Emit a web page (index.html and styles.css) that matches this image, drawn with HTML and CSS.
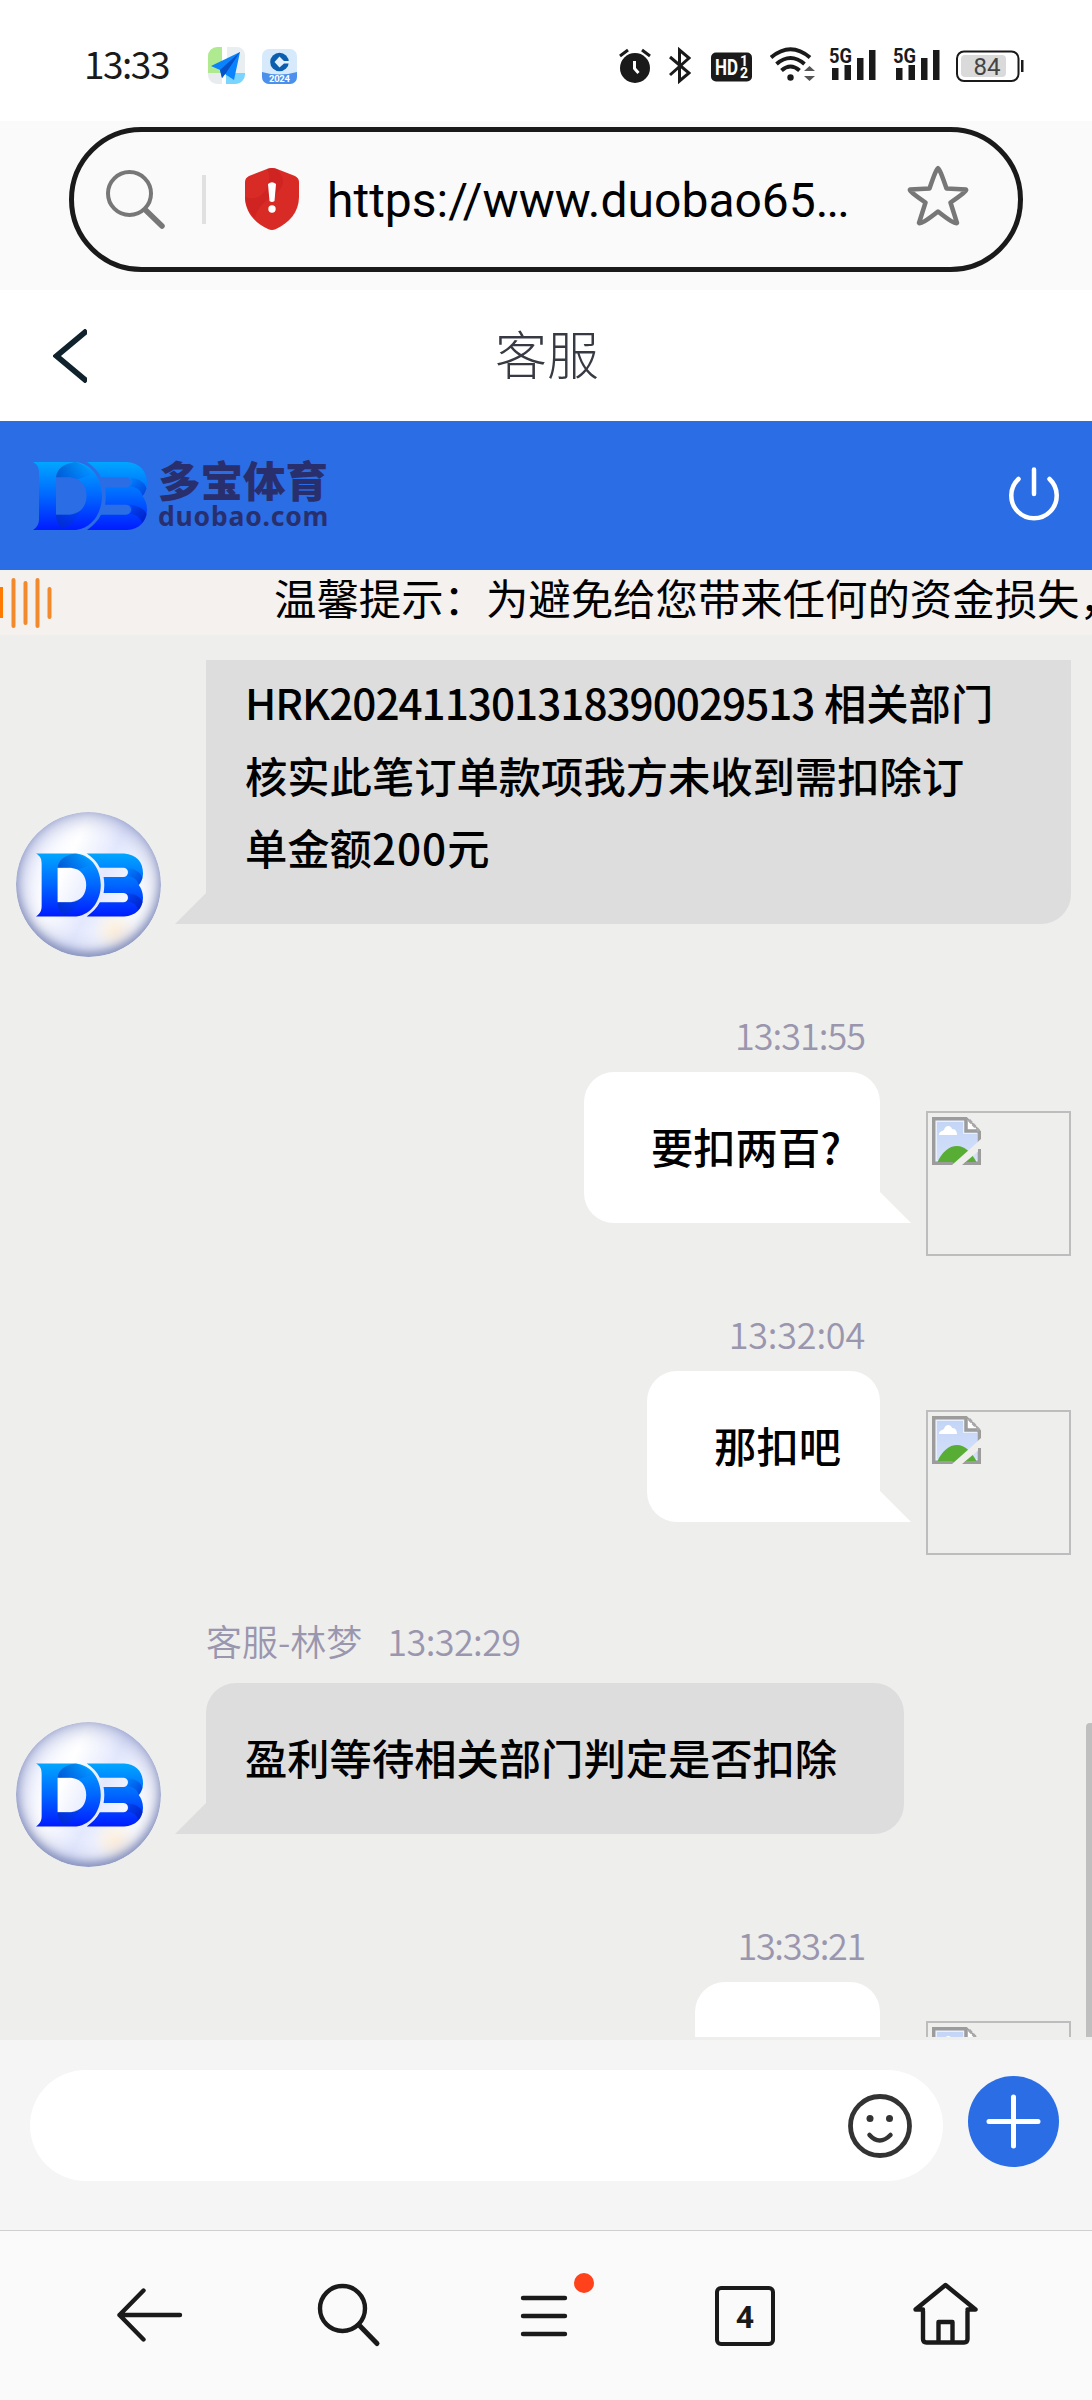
FILE: index.html
```html
<!DOCTYPE html>
<html lang="zh-CN">
<head>
<meta charset="utf-8">
<title>客服</title>
<link rel="stylesheet" href="styles.css">
</head>
<body>
<svg class="defs" width="0" height="0" aria-hidden="true">
  <defs>
    <linearGradient id="db-fill" x1="0" y1="0" x2="0" y2="67" gradientUnits="userSpaceOnUse">
      <stop offset="0" stop-color="#00a6ff"/><stop offset=".5" stop-color="#0066ff"/><stop offset="1" stop-color="#001cff"/>
    </linearGradient>
    <linearGradient id="db-fold" x1="0" y1="0" x2="1" y2="0">
      <stop offset="0" stop-color="#0030b0" stop-opacity=".55"/><stop offset="1" stop-color="#0040d0" stop-opacity="0"/>
    </linearGradient>
    <linearGradient id="db-curl" x1="1" y1="1" x2="0" y2="0">
      <stop offset="0" stop-color="#0018b8" stop-opacity=".75"/><stop offset="1" stop-color="#0040d0" stop-opacity="0"/>
    </linearGradient>
    <symbol id="db" viewBox="0 0 114 67">
      <path fill="url(#db-fill)" fill-rule="evenodd" d="M0 0H43C60 2 69 18 69 33.500C69 49 60 65 43 67H0C5 64 6 60 6 56V11C6 6 5 3 0 0ZM23 15V52H37C48 51 53.500 43 53.500 33.500C53.500 24 48 16 37 15Z"/>
      <path fill="url(#db-fill)" d="M54 0H94C107 1 114 9 114 21C114 27 111.500 31 109.500 33.500C112 37 114 41 114 47C114 59 106 66 94 67H54C60 63 65 58 68 52H93A5 5 0 0 0 93 42H72C73 37 73 30 72 25H93A5 5 0 0 0 93 15H68C65 9 60 4 54 0Z"/>
      <path fill="url(#db-fold)" d="M23 15C24 7 30 2 42 0C50 2 56 6 60 12L45 17L37 15ZM23 52H37L48 48L40 60L30 66C25 62 23 58 23 52Z"/>
      <path fill="url(#db-curl)" d="M93 15C105 15 112 20 113.500 26C112 30 111 32 109.500 33.500C108 28 104 25 97 24A5 5 0 0 0 93 15ZM93 42C105 42 112 46 113.500 52C112 56 111 58 109 60C107 55 104 52 97 51A5 5 0 0 0 93 42Z"/>
    </symbol>
    <linearGradient id="sky" x1="0" y1="0" x2="0" y2="1"><stop offset="0" stop-color="#c3d5f6"/><stop offset="1" stop-color="#d4e0fa"/></linearGradient>
    <symbol id="broken" viewBox="0 0 49 48">
      <path fill="#e9f0fd" stroke="#9c9c9c" stroke-width="3.500" d="M1.700 1.700H34L47.300 15V46.300H1.700Z"/>
      <path fill="url(#sky)" d="M5 5H31V17H45V43H5Z"/>
      <path fill="#fff" d="M7 18C7 14 11 14 12 13C13 8 19 8 20 12C24 12 25 15 25 18Z"/>
      <path fill="#58ae35" d="M5 46C10 35 17 29 25 29C33 29 40 36 45 46Z"/>
      <path fill="#fff" stroke="#9c9c9c" stroke-width="3.500" d="M34 1.500V14H47"/>
      <path fill="#eeeeec" d="M49 22V32L30 48H20L38 32Z"/>
      <path fill="#9c9c9c" d="M0 45H21L20 48H0ZM46 32H49V48H31L34 45H46Z"/>
      <path fill="#eeeeec" d="M40 0H49V10Z"/>
      <path d="M37 3L47 14" stroke="#a8a8a8" stroke-width="3" stroke-dasharray="4 1.500"/>
    </symbol>
    <symbol id="signal" viewBox="0 0 47 40">
      <text x="0" y="17" class="tiny" font-size="21" textLength="23" lengthAdjust="spacingAndGlyphs">5G</text>
      <path d="M3 22h6.500v12h-6.500zM15.500 19h6.500v15h-6.500zM28 12h6.500v22h-6.500zM40 4h6.500v30h-6.500z"/>
    </symbol>
  </defs>
</svg>

<header class="status">
  <span class="clock">13:33</span>
  <svg class="app-map" width="38" height="40" viewBox="0 0 38 40">
    <path fill="#e9eff1" d="M19 1H29a8 8 0 0 1 8 8V27H19Z"/><path fill="#afe990" d="M0 10a9 9 0 0 1 9-9H14V28H0Z"/>
    <path fill="#e8ecef" d="M0 27H14V38H9a9 9 0 0 1-9-9Z"/><path fill="#79d5ff" d="M18 27H37a10 10 0 0 1-10 11H18Z"/>
    <path fill="#0a83ff" d="M32 6L3 20L12 24L14 32L17 28L26 34Z"/><path fill="#0751c8" d="M32 6L12 24L14 32L18 27Z"/>
  </svg>
  <svg class="app-bank" width="35" height="40" viewBox="0 0 35 40">
    <rect y="3" width="35" height="35" rx="7" fill="#d7eafb"/>
    <path fill="#4a90ec" d="M0 26Q17 31 35 26V31a7 7 0 0 1-7 7H7a7 7 0 0 1-7-7Z"/>
    <circle cx="17.500" cy="16" r="9.300" fill="#0b5fae"/><path fill="#e4f1fc" d="M17.500 10.500L22 15H28V17.500H22L17.500 21.500L12.500 16Z"/>
    <text x="7" y="35.500" font-size="9.500" class="year" textLength="21">2024</text>
  </svg>
  <div class="indicators">
    <svg width="32" height="40" viewBox="0 0 32 40"><circle cx="16" cy="22" r="15"/><path d="M1 10L9 4M31 10L23 4" stroke="#1a1a1a" stroke-width="3"/><path d="M15.500 15V22.500L19.500 27" stroke="#fff" stroke-width="3" fill="none"/></svg>
    <svg class="bt" width="22" height="40" viewBox="0 0 22 40"><path d="M1 11L20 27L10.500 35V4L20 12L1 29" fill="none" stroke="#1a1a1a" stroke-width="3"/></svg>
    <svg class="hd" width="41" height="40" viewBox="0 0 41 40"><rect y="6.500" width="41" height="29" rx="5"/><text x="4" y="29" font-size="22" fill="#fff" class="tiny inv" textLength="23" lengthAdjust="spacingAndGlyphs">HD</text><text x="29" y="19.500" font-size="14" class="tiny inv">1</text><text x="29" y="32" font-size="14" class="tiny inv">2</text></svg>
    <svg class="wifi" width="45" height="40" viewBox="0 0 45 40"><g fill="none" stroke="#1a1a1a" stroke-width="4"><path d="M1 11.500Q20.500-5 40 11.500M6.500 18Q20.500 6 34.500 18M11.500 24.500Q20.500 16.500 29.500 24.500"/></g><circle cx="20.500" cy="31.500" r="3.200"/><path fill="#555" d="M34 25L39.500 20L45 25ZM34 30L39.500 35L45 30Z"/></svg>
    <svg class="sig" width="47" height="40"><use href="#signal"/></svg>
    <svg class="sig2" width="47" height="40"><use href="#signal"/></svg>
    <svg class="batt" width="68" height="40" viewBox="0 0 68 40"><rect x="1" y="5.500" width="61.500" height="29.500" rx="7" fill="#fff" stroke="#1a1a1a" stroke-width="2"/><rect x="5" y="9" width="45" height="22" rx="4" fill="#dadada"/><path d="M65 14h2.500v12h-2.500z"/><text x="17.500" y="28.500" font-size="24" class="pct" textLength="27">84</text></svg>
  </div>
</header>

<div class="address-area">
  <div class="address">
    <svg class="a-search" width="60" height="60" viewBox="0 0 60 60" fill="none" stroke="#777" stroke-linecap="round"><circle cx="24.500" cy="24.500" r="21.500" stroke-width="4"/><path d="M40.500 41L57 57" stroke-width="5.500"/></svg>
    <span class="divider"></span>
    <svg class="shield" width="54" height="62" viewBox="0 0 54 62"><path fill="#d92b25" d="M22 1Q27-1 32 1L50 8Q54 10 54 14V29C54 44 44 55 31 61Q27 63 23 61C10 55 0 44 0 29V14Q0 10 4 8Z"/><path fill="#c9211f" d="M22 1Q27-1 32 1C38 8 40 14 36 20C30 30 14 32 10 50C4 44 0 37 0 29C9 33 18 28 22 20C24 14 26 8 22 1Z" opacity=".65"/><path fill="#fff" d="M23 16Q27 12.500 31 16L29.500 33Q27 35 24.500 33Z"/><circle cx="27" cy="41" r="3.700" fill="#fff"/></svg>
    <span class="url">https://www.duobao65<span class="more">...</span></span>
    <svg class="star" width="62" height="62" viewBox="0 0 62 62"><path fill="none" stroke="#777" stroke-width="4.500" stroke-linejoin="round" d="M31 3Q32.500 3 39.500 23.500L59 24.500Q60.500 26 43.500 37.500L50 58Q48 60 31 46.500Q14 60 12 58L18.500 37.500Q1.500 26 3 24.500L22.500 23.500Q29.500 3 31 3Z"/></svg>
  </div>
</div>

<div class="titlebar">
  <svg width="34" height="54" viewBox="0 0 34 54"><path fill="none" stroke="#10222b" stroke-width="5.600" d="M34 1.500L3.500 27L34 52.500"/></svg>
  <h1>客服</h1>
</div>

<div class="brand">
  <svg class="mark" width="114" height="68" viewBox="0 0 114 67" preserveAspectRatio="none"><use href="#db"/></svg>
  <div class="brand-name"><b>多宝体育</b><span>duobao.com</span></div>
  <svg class="power" width="50" height="56" viewBox="0 0 50 56" fill="none" stroke="#fff" stroke-width="4.500" stroke-linecap="round"><path d="M25 2.500V27M9.500 12A22.700 22.700 0 1 0 40.500 12"/></svg>
</div>

<div class="notice">
  <svg width="54" height="52" viewBox="0 0 54 52" stroke="#f28a2d" stroke-width="4" stroke-linecap="round"><path stroke="#ff7a00" stroke-width="6" stroke-linecap="butt" d="M0 11V42"/><path d="M13.500 4V50M25.500 7V47M37.500 4V50M49.500 13V41"/></svg>
  <p>温馨提示：为避免给您带来任何的资金损失，</p>
</div>

<main class="chat">
  <div class="thread">
    <div class="msg agent">
      <div class="avatar"><svg width="107" height="64"><use href="#db"/></svg></div>
      <div class="body"><div class="bubble clipped"><span class="order">HRK202411301318390029513</span> 相关部门<br>核实此笔订单款项我方未收到需扣除订<br>单金额<span class="num">200</span>元</div></div>
    </div>
    <div class="msg user">
      <div class="body"><div class="meta t1">13:31:55</div><div class="bubble">要扣两百?</div></div>
      <div class="noimg"><svg width="49" height="48"><use href="#broken"/></svg></div>
    </div>
    <div class="msg user">
      <div class="body"><div class="meta t2">13:32:04</div><div class="bubble">那扣吧</div></div>
      <div class="noimg"><svg width="49" height="48"><use href="#broken"/></svg></div>
    </div>
    <div class="msg agent later">
      <div class="avatar"><svg width="107" height="64"><use href="#db"/></svg></div>
      <div class="body"><div class="meta"><span>客服-林梦</span><span class="t3">13:32:29</span></div><div class="bubble">盈利等待相关部门判定是否扣除</div></div>
    </div>
    <div class="msg user">
      <div class="body"><div class="meta t4">13:33:21</div><div class="bubble short"></div></div>
      <div class="noimg"><svg width="49" height="48"><use href="#broken"/></svg></div>
    </div>
    <span class="scrollbar"></span>
  </div>
</main>

<div class="composer">
  <div class="field">
    <svg width="66" height="66" viewBox="0 0 66 66"><circle cx="33" cy="33" r="29.500" fill="none" stroke="#333" stroke-width="4.800"/><circle cx="23" cy="25.500" r="3.500" fill="#333"/><circle cx="42.500" cy="25.500" r="3.500" fill="#333"/><path d="M22.500 42Q32.500 53 43.500 42" fill="none" stroke="#333" stroke-width="4.500" stroke-linecap="round"/></svg>
  </div>
  <svg class="plus" width="91" height="91" viewBox="0 0 91 91"><circle cx="45.500" cy="45.500" r="45.500" fill="#2b6de5"/><path d="M45.500 21V70M21 45.500H70" stroke="#fff" stroke-width="5" stroke-linecap="round"/></svg>
</div>

<nav class="tabs">
  <svg width="66" height="66" viewBox="0 0 66 66"><path d="M63 33H2.500M26.500 8.500L2.500 33L26.500 57.500"/></svg>
  <svg width="66" height="66" viewBox="0 0 66 66"><circle cx="26.500" cy="26.500" r="22.500"/><path d="M43 43L61 61.500" stroke-width="5"/></svg>
  <div class="menu"><svg width="66" height="66" viewBox="0 0 66 66"><path d="M8 16H50M8 34H50M8 52H50"/></svg><i class="dot"></i></div>
  <div class="count">4</div>
  <svg width="66" height="66" viewBox="0 0 66 66"><path d="M10 29V57Q10 60.500 13.500 60.500H51Q54.500 60.500 54.500 57V29M10 27.500H2.500L32.500 3L62.500 27.500H54.500M25.500 60V40H39.500V60"/></svg>
</nav>
</body>
</html>
```

FILE: styles.css
```css
* { box-sizing: border-box; }
body {
  margin: 0;
  width: 1092px;
  height: 2400px;
  overflow: hidden;
  display: flex;
  flex-direction: column;
  background: #fff;
  color: #000;
  font-family: "Noto Sans CJK SC", "Noto Sans", sans-serif;
}
body > * { flex: none; }
svg { display: block; flex: none; }
.defs { height: 0; position: absolute; }

/* status bar */
.status { height: 121px; padding: 46px 68px 0 84px; display: flex; align-items: flex-start; }
.clock { width: 124px; font-size: 37px; line-height: 35px; font-weight: 400; letter-spacing: -1.5px; color: #1a1a1a; }
.app-bank { margin-left: 16px; }
.year { font-family: Roboto, sans-serif; font-weight: 700; fill: #fff; }
.indicators { margin-left: auto; display: flex; fill: #1a1a1a; }
.tiny { font-family: Roboto, sans-serif; font-weight: 700; }
.inv { fill: #fff; }
.bt { margin-left: 18px; }
.hd { margin-left: 20px; }
.wifi { margin-left: 18px; }
.sig { margin-left: 14px; }
.sig2 { margin-left: 17px; }
.batt { margin-left: 16px; }
.pct { font-family: Roboto, sans-serif; fill: #444; }

/* address bar */
.address-area { height: 169px; padding: 6px 69px 0; background: #fafafa; }
.address { height: 145px; border: 5px solid #1a1a1a; border-radius: 73px; display: flex; align-items: flex-start; padding: 0 49px 0 31px; }
.a-search { margin-top: 37px; }
.divider { margin: 43px 0 0 37px; width: 4px; height: 49px; background: #e0e0e0; }
.shield { margin: 36px 0 0 39px; }
.url { margin: 41px 0 0 28px; font: 48px/56px Roboto, sans-serif; white-space: nowrap; }
.more { letter-spacing: -2px; }
.star { margin: 33px 0 0 auto; }

/* page title */
.titlebar { height: 131px; padding-left: 53px; display: flex; align-items: center; background: #fff; }
h1 { margin: 0 85px 6px 0; flex: 1; text-align: center; font-size: 52px; line-height: 60px; font-weight: 300; color: #383a43; }

/* brand strip */
.brand { height: 149px; background: #2b6de5; display: flex; padding: 41px 33px 0 33px; }
.brand-name { margin-left: 11px; color: #292f6d; display: flex; flex-direction: column; }
.brand-name b { margin-top: -4px; font-size: 42.500px; line-height: 42px; font-weight: 900; }
.brand-name span { margin-top: 1px; font: 700 26.500px/30px "Noto Sans", sans-serif; letter-spacing: .8px; }
.power { margin: 5px 0 0 auto; }

/* notice */
.notice { height: 65px; background: #f4f1ee; display: flex; padding-top: 6px; overflow: hidden; }
.notice p { margin: 0 0 0 220px; font-size: 42.400px; line-height: 42px; white-space: nowrap; }

/* conversation */
.chat { height: 1405px; background: #eeeeec; padding-top: 25px; }
.thread { position: relative; height: 1377px; overflow: hidden; }
.msg { display: flex; align-items: flex-end; margin-top: 61px; }
.msg:first-child { margin-top: 0; }
.msg.later { margin-top: 69px; }
.agent { padding-left: 16px; }
.user { justify-content: flex-end; padding-right: 21px; }
.body { display: flex; flex-direction: column; padding-bottom: 33px; }
.agent .body { margin-left: 45px; align-items: flex-start; }
.user .body { margin-right: 46px; align-items: flex-end; }
.meta { height: 36px; margin-bottom: 18px; font-size: 36px; line-height: 32px; font-weight: 350; color: #9a96ae; white-space: nowrap; display: flex; gap: 25px; }
.user .meta { margin-right: 15px; }
.agent .meta { margin-bottom: 23px; }
.t1 { letter-spacing: -1px; }
.t2 { letter-spacing: -.2px; }
.t3 { letter-spacing: -.6px; }
.t4 { letter-spacing: -1.300px; }
.bubble { position: relative; height: 151px; padding: 38px 39px 0 67px; border-radius: 30px; font-size: 42.300px; line-height: 72.500px; font-weight: 500; white-space: nowrap; background: #fff; }
.user .bubble { border-bottom-right-radius: 0; }
.agent .bubble { width: 698px; padding-left: 39px; border-bottom-left-radius: 0; background: #ddd; }
.bubble::after { content: ""; position: absolute; bottom: 0; width: 31px; height: 31px; background: inherit; }
.user .bubble::after { left: 100%; clip-path: polygon(0 0, 100% 100%, 0 100%); }
.agent .bubble::after { right: 100%; clip-path: polygon(100% 0, 100% 100%, 0 100%); }
.agent .bubble.clipped { width: 865px; height: 264px; padding-top: 6px; border-radius: 0 0 30px 0; }
.user .bubble.short { width: 185px; }
.order { letter-spacing: -1px; }
.num { letter-spacing: 1px; }
.avatar {
  width: 145px; height: 145px; border-radius: 50%; padding: 41px 0 0 20px; flex: none;
  background: radial-gradient(circle at 68% 82%, #fff1dc 0, #fff1dc00 14%), linear-gradient(115deg, #eef1ff 10%, #fff 35%, #e3e8fd 55%, #fff 80%);
  box-shadow: inset 0 0 22px #8792c4, inset 0 -4px 8px #8792b8;
}
.noimg { width: 145px; height: 145px; flex: none; border: 2px solid #bdbdbd; padding: 4px; }
.scrollbar { position: absolute; right: 0; top: 1063px; width: 6px; height: 314px; background: #bfbfbf; border-radius: 4px 0 0 0; }

/* message input */
.composer { height: 190px; background: #f5f5f5; display: flex; padding: 30px 33px 0 30px; justify-content: space-between; }
.field { width: 913px; height: 111px; border-radius: 56px; background: #fff; display: flex; justify-content: flex-end; padding: 23px 30px 0 0; }
.plus { margin-top: 6px; }

/* browser navigation */
.tabs { height: 170px; border-top: 1px solid #d0d0d0; background: #fafafa; display: flex; justify-content: space-between; padding: 51px 113px 0 117px; }
.tabs svg { fill: none; stroke: #1a1a1a; stroke-width: 4.400; stroke-linecap: round; stroke-linejoin: round; }
.menu { position: relative; }
.dot { position: absolute; left: 59px; top: -9px; width: 20px; height: 20px; border-radius: 50%; background: #ff411c; }
.count { width: 60px; height: 60px; margin: 4px 5px 0 1px; border: 4px solid #1a1a1a; border-radius: 6px; text-align: center; font: 700 32px/54px Roboto, sans-serif; color: #1a1a1a; }
```
